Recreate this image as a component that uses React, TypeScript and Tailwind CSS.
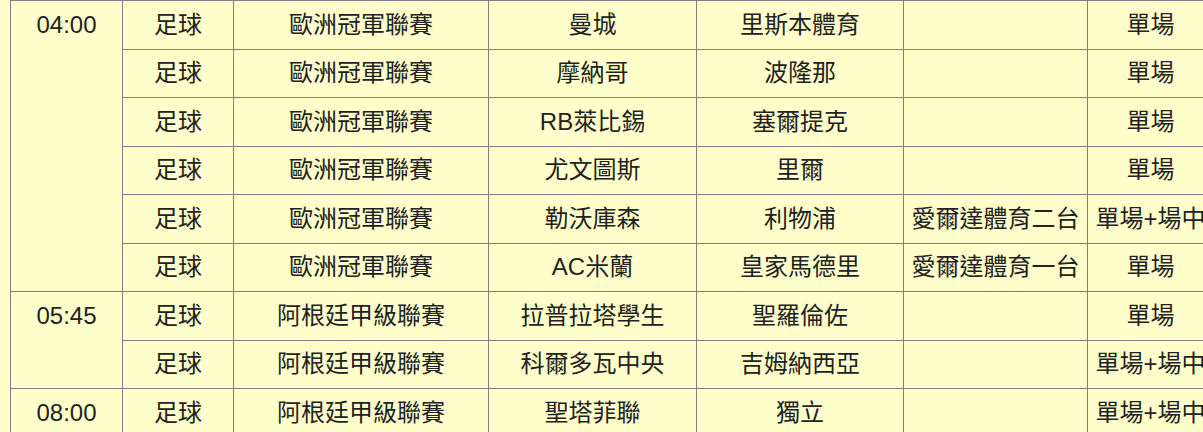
import React from 'react';

type Match = { sport: string; league: string; home: string; away: string; tv: string; bet: string };
type Slot = { time: string; matches: Match[] };

const UCL = '歐洲冠軍聯賽';
const ARG = '阿根廷甲級聯賽';

const schedule: Slot[] = [
  {
    time: '04:00',
    matches: [
      { sport: '足球', league: UCL, home: '曼城', away: '里斯本體育', tv: '', bet: '單場' },
      { sport: '足球', league: UCL, home: '摩納哥', away: '波隆那', tv: '', bet: '單場' },
      { sport: '足球', league: UCL, home: 'RB萊比錫', away: '塞爾提克', tv: '', bet: '單場' },
      { sport: '足球', league: UCL, home: '尤文圖斯', away: '里爾', tv: '', bet: '單場' },
      { sport: '足球', league: UCL, home: '勒沃庫森', away: '利物浦', tv: '愛爾達體育二台', bet: '單場+場中' },
      { sport: '足球', league: UCL, home: 'AC米蘭', away: '皇家馬德里', tv: '愛爾達體育一台', bet: '單場' },
    ],
  },
  {
    time: '05:45',
    matches: [
      { sport: '足球', league: ARG, home: '拉普拉塔學生', away: '聖羅倫佐', tv: '', bet: '單場' },
      { sport: '足球', league: ARG, home: '科爾多瓦中央', away: '吉姆納西亞', tv: '', bet: '單場+場中' },
    ],
  },
  {
    time: '08:00',
    matches: [{ sport: '足球', league: ARG, home: '聖塔菲聯', away: '獨立', tv: '', bet: '單場+場中' }],
  },
];

const cell = 'border border-[#808080] text-center align-middle p-0 whitespace-nowrap';

function App() {
  return (
    <div
      className="min-h-screen w-screen overflow-hidden bg-[#ffffcc] text-[#222] text-[24px] leading-[28px]"
      style={{ fontFamily: '"Liberation Sans", "Noto Sans CJK TC", sans-serif' }}
    >
      <table className="ml-[10px] border-collapse table-fixed w-[1203px]">
        <colgroup>
          <col className="w-[112px]" />
          <col className="w-[111px]" />
          <col className="w-[255px]" />
          <col className="w-[208px]" />
          <col className="w-[207px]" />
          <col className="w-[184px]" />
          <col className="w-[126px]" />
        </colgroup>
        <tbody>
          {schedule.map((slot) =>
            slot.matches.map((m, i) => (
              <tr key={slot.time + i} className="h-[48.5px]">
                {i === 0 && (
                  <td rowSpan={slot.matches.length} className={`${cell} !align-top pt-[10px]`}>
                    {slot.time}
                  </td>
                )}
                <td className={cell}>{m.sport}</td>
                <td className={cell}>{m.league}</td>
                <td className={cell}>{m.home}</td>
                <td className={cell}>{m.away}</td>
                <td className={cell}>{m.tv}</td>
                <td className={cell}>{m.bet}</td>
              </tr>
            ))
          )}
        </tbody>
      </table>
    </div>
  );
}

export default App;
